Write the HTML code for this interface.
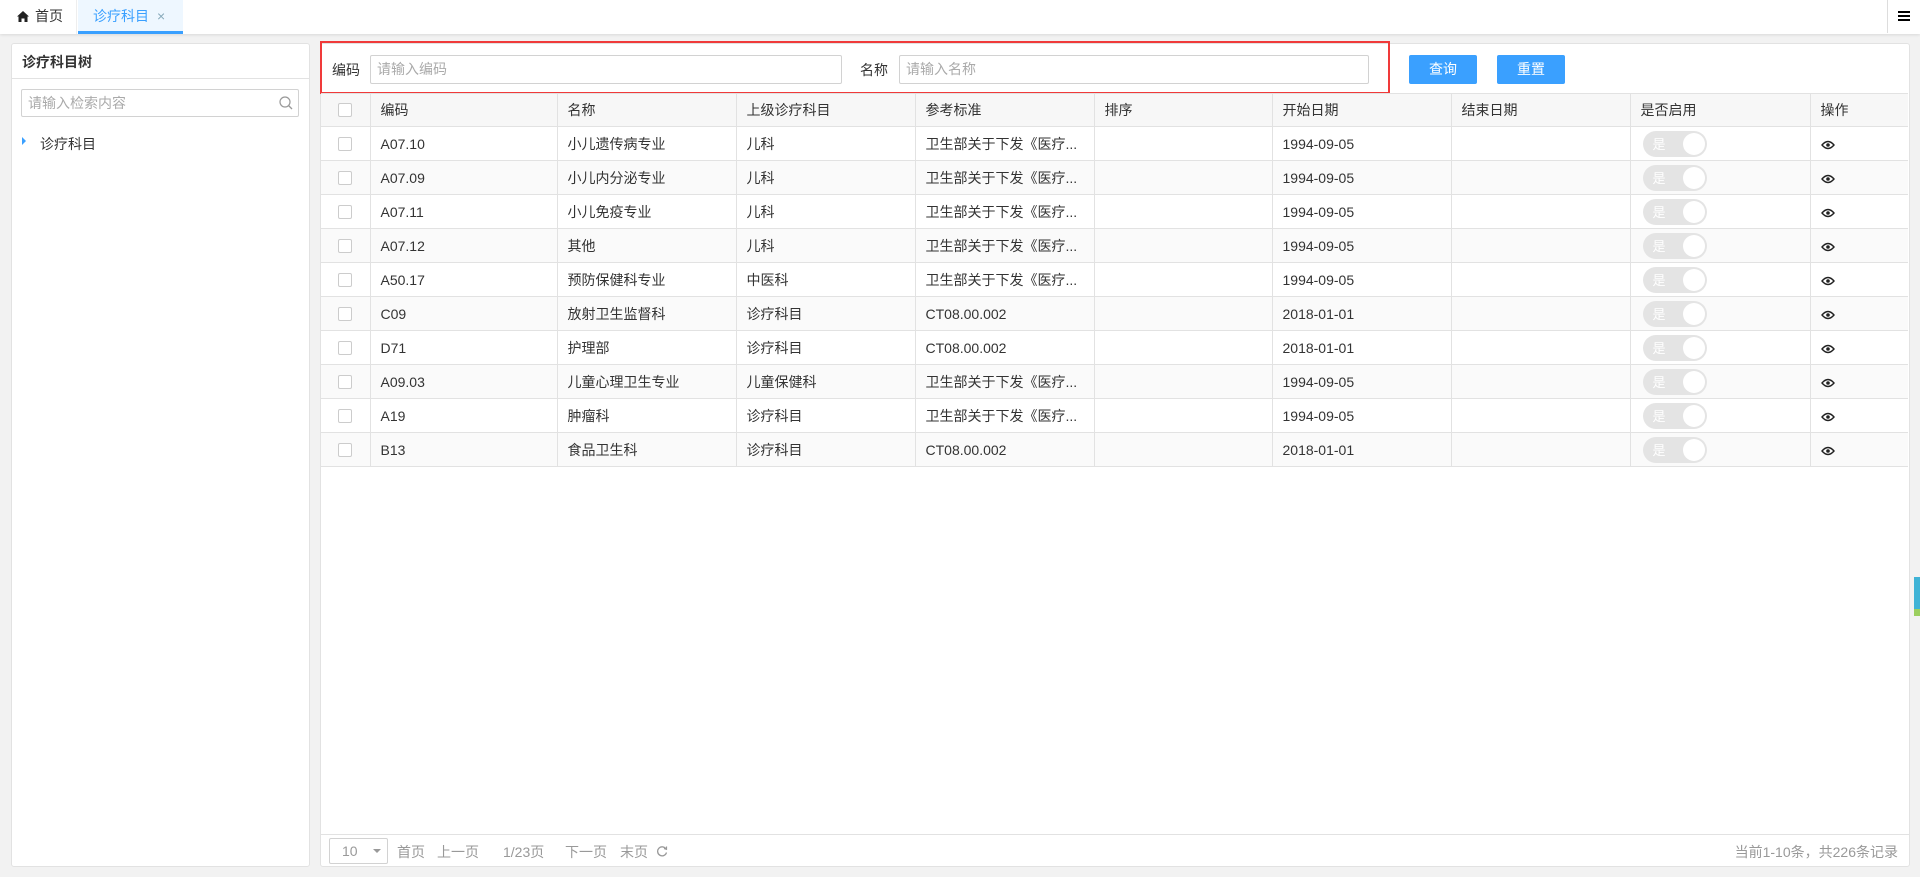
<!DOCTYPE html>
<html><head><meta charset="utf-8"><style>
*{box-sizing:border-box;margin:0;padding:0}
body{width:1920px;height:877px;background:#f2f2f2;font-family:"Liberation Sans","Noto Sans CJK SC",sans-serif;font-size:14px;color:#333;position:relative;overflow:hidden}
.abs{position:absolute}
.topbar{left:0;top:0;width:1920px;height:34px;background:#fff;box-shadow:0 1px 3px rgba(0,0,0,.1)}
.tab{top:0;height:34px;line-height:33px;font-size:14px}
.panel{background:#fff;border:1px solid #e2e2e2;border-radius:3px}
.inp{border:1px solid #d2d2d2;border-radius:2px;background:#fff;color:#aaa;font-size:14px;padding-left:6px}
.btn{background:#3aa0ff;color:#fff;text-align:center;line-height:28px;border-radius:2px;font-size:14px}
table{border-collapse:collapse;table-layout:fixed;position:absolute;left:321px;top:93px;width:1587px}
td{border:1px solid #e2e2e2;height:34px;padding-left:10px;font-size:14px;white-space:nowrap;overflow:hidden}
tr:first-child td{height:33px;background:#f7f7f7}
tr:nth-child(odd):not(:first-child) td{background:#fafafa}
td:first-child{border-left:none;padding-left:0}
td:last-child{border-right:none}
.cb{display:block;margin:0 auto;width:14px;height:14px;border:1px solid #ccc;border-radius:2px;background:#fff}
.sw{display:inline-block;width:64px;height:26px;border-radius:13px;background:#e4e4e4;position:relative;vertical-align:middle;margin-left:2px}
.sw span{position:absolute;left:10px;top:3px;color:#fff;font-size:13px}
.sw i{position:absolute;right:2px;top:2px;width:22px;height:22px;border-radius:50%;background:#fff}
.pg{top:842px;color:#999;font-size:14px}
</style></head><body>
<div class="abs topbar"></div>
<div class="abs tab" style="left:0;width:77px;border-right:1px solid #eee">
<svg class="abs" style="left:17px;top:11px" width="12" height="11" viewBox="0 0 12 11"><path d="M6 0 L12 5.5 L10.5 5.5 L10.5 11 L7.5 11 L7.5 7.5 L4.5 7.5 L4.5 11 L1.5 11 L1.5 5.5 L0 5.5 Z" fill="#222"/></svg>
<span class="abs" style="left:35px">首页</span></div>
<div class="abs tab" style="left:78px;width:105px;background:#eef7ff;border-bottom:3px solid #3aa0ff;color:#3aa0ff"><span class="abs" style="left:15px">诊疗科目</span><span class="abs" style="left:79px;color:#8ab;font-size:14px">×</span></div>
<div class="abs" style="left:1887px;top:0;width:1px;height:33px;background:#ddd"></div>
<div class="abs" style="left:1898px;top:11px;width:12px;height:2px;background:#000;box-shadow:0 4px 0 #000,0 8px 0 #000"></div>

<div class="abs panel" style="left:11px;top:43px;width:299px;height:824px"></div>
<div class="abs" style="left:22px;top:52px;font-weight:bold;font-size:14px">诊疗科目树</div>
<div class="abs" style="left:12px;top:78px;width:297px;height:1px;background:#e2e2e2"></div>
<div class="abs inp" style="left:21px;top:89px;width:278px;height:28px;line-height:26px">请输入检索内容</div>
<svg class="abs" style="left:279px;top:96px" width="14" height="14" viewBox="0 0 14 14"><circle cx="6" cy="6" r="5" fill="none" stroke="#999" stroke-width="1.2"/><path d="M9.5 9.5 L13 13" stroke="#999" stroke-width="1.3"/></svg>
<div class="abs" style="left:22px;top:137px;width:0;height:0;border-left:4px solid #3aa0ff;border-top:4px solid transparent;border-bottom:4px solid transparent"></div>
<div class="abs" style="left:40px;top:134px">诊疗科目</div>

<div class="abs panel" style="left:320px;top:43px;width:1590px;height:824px"></div>
<div class="abs" style="left:320px;top:41px;width:1070px;height:53px;border:2px solid #f03a3a"></div>
<div class="abs" style="left:332px;top:60px">编码</div>
<div class="abs inp" style="left:370px;top:55px;width:472px;height:29px;line-height:27px">请输入编码</div>
<div class="abs" style="left:860px;top:60px">名称</div>
<div class="abs inp" style="left:899px;top:55px;width:470px;height:29px;line-height:27px">请输入名称</div>
<div class="abs btn" style="left:1409px;top:55px;width:68px;height:29px">查询</div>
<div class="abs btn" style="left:1497px;top:55px;width:68px;height:29px">重置</div>

<table>
<colgroup><col style="width:49px"><col style="width:187px"><col style="width:179px"><col style="width:179px"><col style="width:179px"><col style="width:178px"><col style="width:179px"><col style="width:179px"><col style="width:180px"><col></colgroup>
<tr><td><i class="cb"></i></td><td>编码</td><td>名称</td><td>上级诊疗科目</td><td>参考标准</td><td>排序</td><td>开始日期</td><td>结束日期</td><td>是否启用</td><td>操作</td></tr>
</table>
<script></script>
<div id="rows"></div>
<style>.eye{display:inline-block;vertical-align:middle}</style>
<table style="top:126px">
<colgroup><col style="width:49px"><col style="width:187px"><col style="width:179px"><col style="width:179px"><col style="width:179px"><col style="width:178px"><col style="width:179px"><col style="width:179px"><col style="width:180px"><col></colgroup>
<tr style="display:none"><td></td></tr>
<tr><td><i class="cb"></i></td><td>A07.10</td><td>小儿遗传病专业</td><td>儿科</td><td>卫生部关于下发《医疗...</td><td></td><td>1994-09-05</td><td></td><td><span class="sw"><span>是</span><i></i></span></td><td><svg class="eye" width="14" height="10" viewBox="0 0 14 10"><path d="M1 5 Q7 -2 13 5 Q7 12 1 5Z" fill="none" stroke="#222" stroke-width="1.4"/><circle cx="7" cy="5" r="1.8" fill="#222"/></svg></td></tr>
<tr><td><i class="cb"></i></td><td>A07.09</td><td>小儿内分泌专业</td><td>儿科</td><td>卫生部关于下发《医疗...</td><td></td><td>1994-09-05</td><td></td><td><span class="sw"><span>是</span><i></i></span></td><td><svg class="eye" width="14" height="10" viewBox="0 0 14 10"><path d="M1 5 Q7 -2 13 5 Q7 12 1 5Z" fill="none" stroke="#222" stroke-width="1.4"/><circle cx="7" cy="5" r="1.8" fill="#222"/></svg></td></tr>
<tr><td><i class="cb"></i></td><td>A07.11</td><td>小儿免疫专业</td><td>儿科</td><td>卫生部关于下发《医疗...</td><td></td><td>1994-09-05</td><td></td><td><span class="sw"><span>是</span><i></i></span></td><td><svg class="eye" width="14" height="10" viewBox="0 0 14 10"><path d="M1 5 Q7 -2 13 5 Q7 12 1 5Z" fill="none" stroke="#222" stroke-width="1.4"/><circle cx="7" cy="5" r="1.8" fill="#222"/></svg></td></tr>
<tr><td><i class="cb"></i></td><td>A07.12</td><td>其他</td><td>儿科</td><td>卫生部关于下发《医疗...</td><td></td><td>1994-09-05</td><td></td><td><span class="sw"><span>是</span><i></i></span></td><td><svg class="eye" width="14" height="10" viewBox="0 0 14 10"><path d="M1 5 Q7 -2 13 5 Q7 12 1 5Z" fill="none" stroke="#222" stroke-width="1.4"/><circle cx="7" cy="5" r="1.8" fill="#222"/></svg></td></tr>
<tr><td><i class="cb"></i></td><td>A50.17</td><td>预防保健科专业</td><td>中医科</td><td>卫生部关于下发《医疗...</td><td></td><td>1994-09-05</td><td></td><td><span class="sw"><span>是</span><i></i></span></td><td><svg class="eye" width="14" height="10" viewBox="0 0 14 10"><path d="M1 5 Q7 -2 13 5 Q7 12 1 5Z" fill="none" stroke="#222" stroke-width="1.4"/><circle cx="7" cy="5" r="1.8" fill="#222"/></svg></td></tr>
<tr><td><i class="cb"></i></td><td>C09</td><td>放射卫生监督科</td><td>诊疗科目</td><td>CT08.00.002</td><td></td><td>2018-01-01</td><td></td><td><span class="sw"><span>是</span><i></i></span></td><td><svg class="eye" width="14" height="10" viewBox="0 0 14 10"><path d="M1 5 Q7 -2 13 5 Q7 12 1 5Z" fill="none" stroke="#222" stroke-width="1.4"/><circle cx="7" cy="5" r="1.8" fill="#222"/></svg></td></tr>
<tr><td><i class="cb"></i></td><td>D71</td><td>护理部</td><td>诊疗科目</td><td>CT08.00.002</td><td></td><td>2018-01-01</td><td></td><td><span class="sw"><span>是</span><i></i></span></td><td><svg class="eye" width="14" height="10" viewBox="0 0 14 10"><path d="M1 5 Q7 -2 13 5 Q7 12 1 5Z" fill="none" stroke="#222" stroke-width="1.4"/><circle cx="7" cy="5" r="1.8" fill="#222"/></svg></td></tr>
<tr><td><i class="cb"></i></td><td>A09.03</td><td>儿童心理卫生专业</td><td>儿童保健科</td><td>卫生部关于下发《医疗...</td><td></td><td>1994-09-05</td><td></td><td><span class="sw"><span>是</span><i></i></span></td><td><svg class="eye" width="14" height="10" viewBox="0 0 14 10"><path d="M1 5 Q7 -2 13 5 Q7 12 1 5Z" fill="none" stroke="#222" stroke-width="1.4"/><circle cx="7" cy="5" r="1.8" fill="#222"/></svg></td></tr>
<tr><td><i class="cb"></i></td><td>A19</td><td>肿瘤科</td><td>诊疗科目</td><td>卫生部关于下发《医疗...</td><td></td><td>1994-09-05</td><td></td><td><span class="sw"><span>是</span><i></i></span></td><td><svg class="eye" width="14" height="10" viewBox="0 0 14 10"><path d="M1 5 Q7 -2 13 5 Q7 12 1 5Z" fill="none" stroke="#222" stroke-width="1.4"/><circle cx="7" cy="5" r="1.8" fill="#222"/></svg></td></tr>
<tr><td><i class="cb"></i></td><td>B13</td><td>食品卫生科</td><td>诊疗科目</td><td>CT08.00.002</td><td></td><td>2018-01-01</td><td></td><td><span class="sw"><span>是</span><i></i></span></td><td><svg class="eye" width="14" height="10" viewBox="0 0 14 10"><path d="M1 5 Q7 -2 13 5 Q7 12 1 5Z" fill="none" stroke="#222" stroke-width="1.4"/><circle cx="7" cy="5" r="1.8" fill="#222"/></svg></td></tr>
</table>
<style>table[style] tr:nth-child(odd) td{background:#fafafa}table[style] tr:nth-child(even) td{background:#fff}table[style] tr:first-child td{height:34px}</style>

<div class="abs" style="left:321px;top:834px;width:1588px;height:1px;background:#e2e2e2"></div>
<div class="abs" style="left:329px;top:838px;width:59px;height:26px;border:1px solid #d2d2d2;border-radius:2px;color:#999;padding-left:12px;line-height:24px">10</div>
<div class="abs" style="left:373px;top:849px;width:0;height:0;border-top:4px solid #999;border-left:4px solid transparent;border-right:4px solid transparent"></div>
<div class="abs pg" style="left:397px">首页</div>
<div class="abs pg" style="left:437px">上一页</div>
<div class="abs pg" style="left:503px">1/23页</div>
<div class="abs pg" style="left:565px">下一页</div>
<div class="abs pg" style="left:620px">末页</div>
<svg class="abs" style="left:656px;top:845px" width="12" height="12" viewBox="0 0 12 12"><path d="M10 4 A4.5 4.5 0 1 0 10.5 7.5" fill="none" stroke="#999" stroke-width="1.3"/><path d="M8 3.5 L10.5 4.3 L10.5 1.5" fill="none" stroke="#999" stroke-width="1.2"/></svg>
<div class="abs pg" style="right:22px">当前1-10条，共226条记录</div>
<div class="abs" style="left:1914px;top:577px;width:6px;height:32px;background:#3fb3d6"></div>
<div class="abs" style="left:1914px;top:609px;width:6px;height:7px;background:#9ccf5f"></div>
</body></html>
